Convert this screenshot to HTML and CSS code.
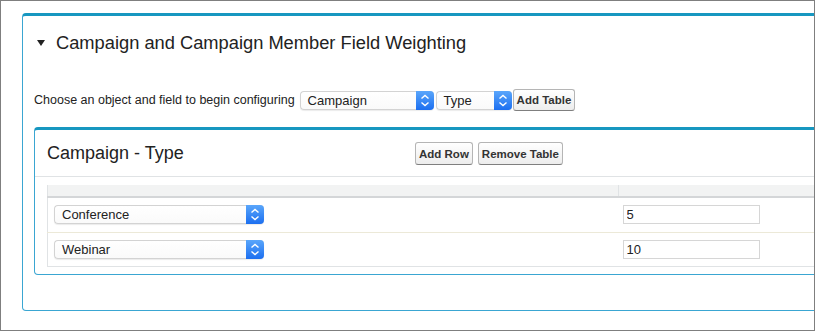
FILE: index.html
```html
<!DOCTYPE html>
<html lang="en">

<head>
    <meta charset="utf-8">
    <title>Campaign Field Weighting</title>
    <meta name="viewport" content="width=device-width, initial-scale=1.0">
    <link rel="stylesheet" href="styles.css">
</head>

<body>
    <div class="cadre">
        <!-- Panneau principal -->
        <section class="panneau">
            <h2 class="titre-section"><span class="triangle"></span>Campaign and Campaign Member Field Weighting</h2>

            <div class="ligne-choix">
                <span class="libelle">Choose an object and field to begin configuring</span>
                <div class="liste liste-objet">
                    <span class="liste-texte">Campaign</span>
                    <span class="fleches">
                        <svg viewBox="0 0 18 19" width="18" height="19">
                            <path d="M5.5 7.5 L9 4.5 L12.5 7.5 M5.5 11.5 L9 14.5 L12.5 11.5" fill="none" stroke="#fff" stroke-width="1.4"/>
                        </svg>
                    </span>
                </div>
                <div class="liste liste-champ">
                    <span class="liste-texte">Type</span>
                    <span class="fleches">
                        <svg viewBox="0 0 18 19" width="18" height="19">
                            <path d="M5.5 7.5 L9 4.5 L12.5 7.5 M5.5 11.5 L9 14.5 L12.5 11.5" fill="none" stroke="#fff" stroke-width="1.4"/>
                        </svg>
                    </span>
                </div>
                <button class="bouton">Add Table</button>
            </div>

            <!-- Bloc de la table -->
            <div class="bloc-table">
                <div class="entete-bloc">
                    <h3 class="titre-bloc">Campaign - Type</h3>
                    <div class="boutons">
                        <button class="bouton">Add Row</button>
                        <button class="bouton">Remove Table</button>
                    </div>
                </div>

                <table class="grille">
                    <thead>
                        <tr>
                            <th class="col-valeur"></th>
                            <th class="col-poids"></th>
                        </tr>
                    </thead>
                    <tbody>
                        <tr class="rangee-1">
                            <td>
                                <div class="liste liste-ligne">
                                    <span class="liste-texte">Conference</span>
                                    <span class="fleches">
                                        <svg viewBox="0 0 18 19" width="18" height="19">
                                            <path d="M5.5 7.5 L9 4.5 L12.5 7.5 M5.5 11.5 L9 14.5 L12.5 11.5" fill="none" stroke="#fff" stroke-width="1.4"/>
                                        </svg>
                                    </span>
                                </div>
                            </td>
                            <td><input class="champ" type="text" value="5"></td>
                        </tr>
                        <tr>
                            <td>
                                <div class="liste liste-ligne">
                                    <span class="liste-texte">Webinar</span>
                                    <span class="fleches">
                                        <svg viewBox="0 0 18 19" width="18" height="19">
                                            <path d="M5.5 7.5 L9 4.5 L12.5 7.5 M5.5 11.5 L9 14.5 L12.5 11.5" fill="none" stroke="#fff" stroke-width="1.4"/>
                                        </svg>
                                    </span>
                                </div>
                            </td>
                            <td><input class="champ" type="text" value="10"></td>
                        </tr>
                    </tbody>
                </table>
            </div>
        </section>
    </div>
</body>

</html>
```

FILE: styles.css
```css
/* Normalisation
============================================================*/

* {
    margin: 0;
    padding: 0;
    box-sizing: border-box;
}

body {
    font-family: "Liberation Sans", Arial, sans-serif;
    color: #222;
    background-color: #fff;
}

/* Cadre gris autour de la capture */
.cadre {
    width: 815px;
    height: 331px;
    border: 1px solid #7f7f7f;
    overflow: hidden;
    padding: 12px 0 0 21px;
}

/* Panneau principal
============================================================*/

.panneau {
    width: 900px;
    border: 1px solid #3aa6d2;
    border-top: 3px solid #1797c0;
    border-radius: 4px;
    padding: 0 0 35px 11px;
}

.titre-section {
    margin-top: 16px;
    padding-left: 3px;
    font-size: 18.3px;
    font-weight: normal;
    line-height: 22px;
    display: flex;
    align-items: center;
}

.triangle {
    display: inline-block;
    width: 0;
    height: 0;
    border-left: 4px solid transparent;
    border-right: 4px solid transparent;
    border-top: 6px solid #222;
    margin-right: 11px;
}

.ligne-choix {
    margin-top: 35px;
    height: 22px;
    display: flex;
    align-items: center;
    font-size: 12.5px;
}

.libelle {
    margin-right: 5px;
}

/* Listes déroulantes style Mac */
.liste {
    height: 19px;
    display: flex;
    align-items: stretch;
    border: 1px solid #d3d3d3;
    border-right: none;
    border-radius: 4px;
    background: linear-gradient(#fff, #fafafa);
    box-shadow: 0 1px 1px rgba(0, 0, 0, 0.08);
    font-size: 13px;
}

.liste-texte {
    flex-grow: 1;
    padding-left: 7px;
    line-height: 17px;
}

.fleches {
    width: 18px;
    margin-top: -1px;
    margin-bottom: -1px;
    border-radius: 0 4px 4px 0;
    background: linear-gradient(#5aa6fb, #1c6ff0);
    display: flex;
}

.liste-objet {
    width: 134px;
    margin-right: 2px;
}

.liste-champ {
    width: 76px;
    margin-right: 1px;
}

.liste-ligne {
    width: 210px;
}

/* Boutons */
.bouton {
    height: 22px;
    padding: 0 3px;
    font-family: "Liberation Sans", Arial, sans-serif;
    font-size: 11.5px;
    font-weight: bold;
    color: #333;
    background: linear-gradient(#fff, #ededed);
    border: 1px solid #b5b5b5;
    border-bottom-color: #7f7f7f;
    border-radius: 3px;
}

/* Bloc de la table
============================================================*/

.bloc-table {
    margin-top: 16px;
    border: 1px solid #3aa6d2;
    border-top: 3px solid #1797c0;
    border-radius: 4px;
    padding-bottom: 7px;
}

.entete-bloc {
    display: flex;
    align-items: center;
    padding: 12px 0 11px 12px;
    border-bottom: 1px solid #e0e3e5;
}

.titre-bloc {
    width: 368px;
    font-size: 18px;
    font-weight: normal;
}

.boutons {
    display: flex;
    gap: 5px;
}

.boutons .bouton {
    height: 23px;
}

.grille {
    margin: 8px 0 0 12px;
    width: 900px;
    border-collapse: collapse;
    border-left: 1px solid #e0e3e5;
}

.grille th {
    height: 12px;
    background-color: #f2f3f3;
    border-bottom: 2px solid #d4d6d8;
}

.col-valeur {
    width: 571px;
    border-right: 1px solid #e0e3e5;
}

.grille td {
    padding: 7px 0 7px 6px;
    vertical-align: top;
    border-bottom: 1px solid #e0e3e5;
}

.grille td + td {
    padding-left: 4px;
}

.rangee-1 td {
    padding-bottom: 8px;
    border-bottom-color: #ece9d8;
}

.champ {
    display: block;
    width: 137px;
    height: 19px;
    border: 1px solid #d6d6d6;
    padding-left: 3px;
    font-family: "Liberation Sans", Arial, sans-serif;
    font-size: 13px;
    color: #222;
}
```
